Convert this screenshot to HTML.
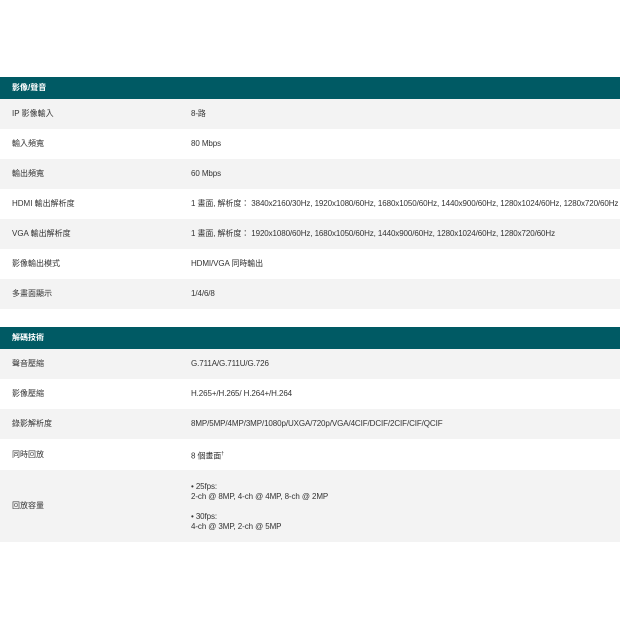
<!DOCTYPE html><html><head><meta charset="utf-8"><style>
body{margin:0;width:620px;height:620px;background:#fff;font-family:"Liberation Sans","Noto Sans CJK TC",sans-serif;font-size:8px;color:#333;overflow:hidden;position:relative}
.h{position:absolute;left:0;width:620px;height:22px;background:#005a64;color:#fff;font-weight:bold;line-height:22px;padding-left:12px;box-sizing:border-box}
.r{position:absolute;left:0;width:620px;height:30px;line-height:30px;white-space:nowrap}
.g{background:#f3f3f3}
.r span{position:absolute;left:12px}
.r b{position:absolute;left:191px;font-weight:normal;letter-spacing:-0.1px}
</style></head><body>
<div class="h" style="top:77px">影像/聲音</div>
<div class="r g" style="top:99px"><span>IP 影像輸入</span><b>8-路</b></div>
<div class="r" style="top:129px"><span>輸入頻寬</span><b>80 Mbps</b></div>
<div class="r g" style="top:159px"><span>輸出頻寬</span><b>60 Mbps</b></div>
<div class="r" style="top:189px"><span>HDMI 輸出解析度</span><b>1 畫面, 解析度： 3840x2160/30Hz, 1920x1080/60Hz, 1680x1050/60Hz, 1440x900/60Hz, 1280x1024/60Hz, 1280x720/60Hz</b></div>
<div class="r g" style="top:219px"><span>VGA 輸出解析度</span><b>1 畫面, 解析度： 1920x1080/60Hz, 1680x1050/60Hz, 1440x900/60Hz, 1280x1024/60Hz, 1280x720/60Hz</b></div>
<div class="r" style="top:249px"><span>影像輸出模式</span><b>HDMI/VGA 同時輸出</b></div>
<div class="r g" style="top:279px"><span>多畫面顯示</span><b>1/4/6/8</b></div>
<div class="h" style="top:327px">解碼技術</div>
<div class="r g" style="top:349px"><span>聲音壓縮</span><b>G.711A/G.711U/G.726</b></div>
<div class="r" style="top:379px"><span>影像壓縮</span><b>H.265+/H.265/ H.264+/H.264</b></div>
<div class="r g" style="top:409px"><span>錄影解析度</span><b>8MP/5MP/4MP/3MP/1080p/UXGA/720p/VGA/4CIF/DCIF/2CIF/CIF/QCIF</b></div>
<div class="r" style="top:439px;height:31px;line-height:31px"><span>同時回放</span><b>8 個畫面<sup style="font-size:5px">†</sup></b></div>
<div class="r g" style="top:470px;height:72px;line-height:72px"><span>回放容量</span><b style="line-height:10px;top:12px">• 25fps:<br>2-ch @ 8MP, 4-ch @ 4MP, 8-ch @ 2MP<br><br>• 30fps:<br>4-ch @ 3MP, 2-ch @ 5MP</b></div>
</body></html>
